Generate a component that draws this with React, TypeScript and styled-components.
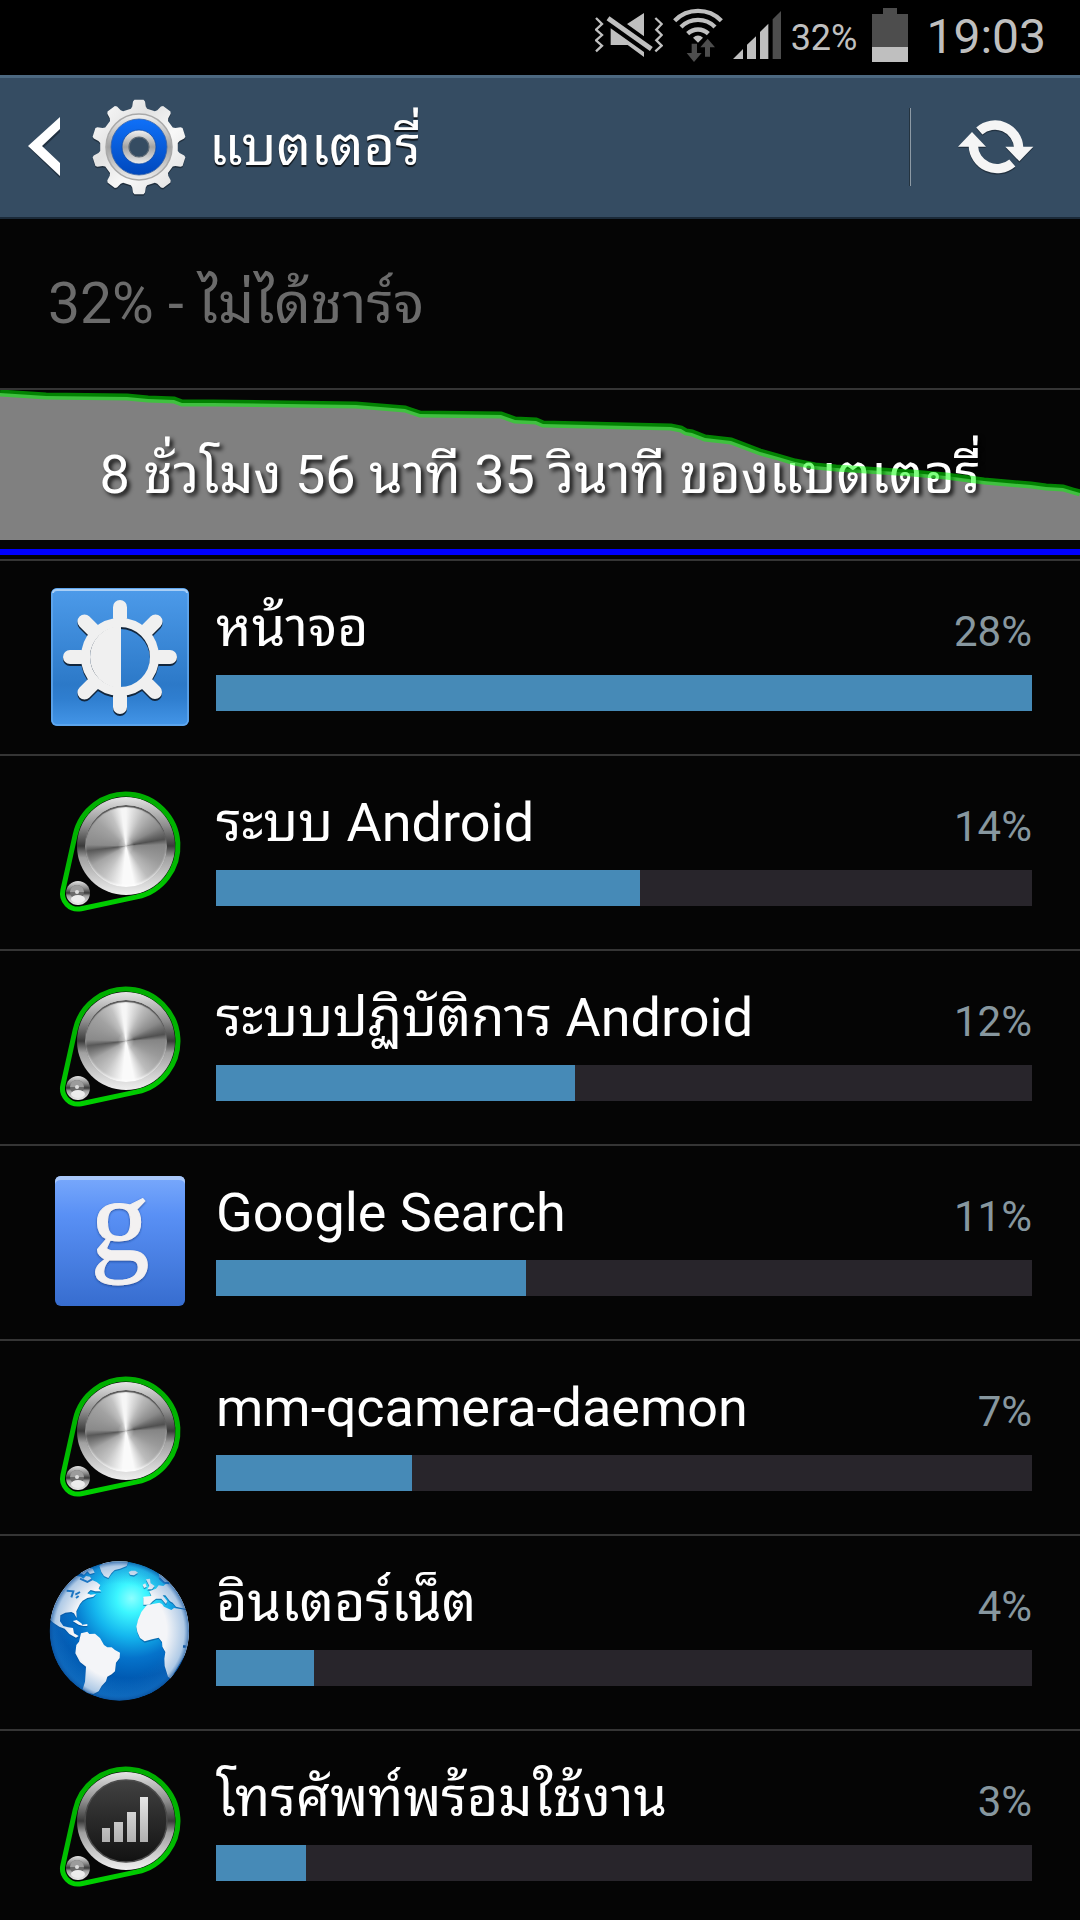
import React from "react";
import styled, { createGlobalStyle } from "styled-components";

const GlobalStyle = createGlobalStyle`
  *, *::before, *::after { box-sizing: border-box; }
  body {
    margin: 0;
    background: #050505;
    color: #fff;
    font-family: Roboto, "Droid Sans Thai", "Noto Sans Thai Looped", Loma, Waree, Garuda, "Noto Sans Thai", "Noto Sans", sans-serif;
  }
`;

const Screen = styled.div`
  display: flex;
  flex-direction: column;
  height: 100vh;
  overflow: hidden;
  background: #050505;
`;

const StatusBar = styled.div`
  flex: none;
  display: flex;
  align-items: center;
  justify-content: flex-end;
  height: 75px;
  padding: 0 34px 5px;
  gap: 10px;
  background: #000;
  color: #bfbfbf;
`;

const BatteryLevel = styled.span`
  padding-top: 5px;
  font-size: 36px;
  line-height: 42px;
`;

const BatterySlot = styled.span`
  display: flex;
  padding: 0 8px 0 5px;
`;

const Clock = styled.time`
  font-size: 48px;
  line-height: 60px;
  padding-top: 4px;
`;

const Header = styled.header`
  flex: none;
  display: flex;
  align-items: center;
  height: 144px;
  padding-top: 2px;
  background: #354c62;
  border-bottom: 2px solid #1b2a39;
  box-shadow: inset 0 3px #4c6880;
`;

const BackButton = styled.button`
  display: flex;
  align-items: center;
  gap: 30px;
  height: 100%;
  padding: 0 22px 0 27px;
  border: 0;
  background: none;
`;

const Title = styled.h1`
  flex: 1;
  margin: 0;
  font-size: 54px;
  font-weight: 400;
  line-height: 84px;
  text-shadow: 0 2px 1px rgba(0, 0, 0, 0.75);
`;

const RefreshButton = styled.button`
  display: flex;
  align-items: center;
  justify-content: center;
  width: 171px;
  height: 78px;
  padding: 0 0 0 2px;
  border: 0;
  border-left: 1px solid #24333f;
  box-shadow: inset 1px 0 #8d9aa5;
  background: none;
`;

const Status = styled.p`
  flex: none;
  margin: 0;
  padding: 0 48px;
  color: #6b6b6b;
  font-size: 57px;
  line-height: 169px;
`;

const ChartPanel = styled.section`
  flex: none;
  display: grid;
  height: 171px;
  border-top: 2px solid #353535;
  > * { grid-area: 1 / 1; }
`;

const ChartLayer = styled.svg`
  display: block;
  width: 100%;
  height: 169px;
`;

const ChartLabel = styled.p`
  align-self: center;
  margin: 0;
  text-align: center;
  font-size: 54px;
  line-height: 84px;
  text-shadow: 3px 3px 4px rgba(0, 0, 0, 0.85);
`;

const List = styled.ul`
  flex: 1;
  min-height: 0;
  margin: 0;
  padding: 0;
  list-style: none;
  overflow-y: auto;
  scrollbar-width: none;
`;

const Item = styled.li`
  display: flex;
  gap: 24px;
  padding: 24px 48px 25px;
  border-top: 2px solid #353535;
`;

const ItemIcon = styled.svg`
  flex: none;
  display: block;
  width: 144px;
  height: 144px;
  overflow: visible;
`;

const ItemBody = styled.div`
  flex: 1;
  min-width: 0;
`;

const ItemHeading = styled.div`
  display: flex;
  align-items: baseline;
  justify-content: space-between;
  height: 90px;
  line-height: 86px;
`;

const Name = styled.span`
  font-size: 54px;
  white-space: nowrap;
`;

const Percent = styled.span`
  font-size: 42px;
  color: #87979f;
`;

const Track = styled.div`
  height: 36px;
  background: #28252b;
`;

const Fill = styled.div<{ $share: number }>`
  width: ${(p) => p.$share}%;
  height: 100%;
  background: #468ab7;
`;

const KnobFace = styled.div`
  width: 82px;
  height: 82px;
  border-radius: 50%;
  background:
    radial-gradient(circle, rgba(255, 255, 255, 0.5) 0, transparent 14%),
    conic-gradient(
      #f6f6f6 0deg, #b8b8b8 30deg, #8a8a8a 60deg, #505050 80deg, #858585 88deg,
      #9a9a9a 115deg, #bcbcbc 145deg, #fafafa 168deg, #fafafa 185deg, #c4c4c4 215deg,
      #a4a4a4 240deg, #585858 263deg, #8a8a8a 272deg, #a2a2a2 310deg, #c2c2c2 335deg, #f6f6f6 353deg
    );
  box-shadow: inset 0 2px 1px #555, inset 0 -2px 2px rgba(255, 255, 255, 0.6);
`;

const VibrateMuteIcon = () => (
  <svg width="68" height="44" viewBox="45 42 204 132" aria-hidden="true">
    <g fill="none" stroke="#bfbfbf" strokeWidth="7">
      <path d="M48 57 66 75 48 92 66 108 48 124 66 140 48 157" />
      <path d="M226 57 245 75 229 92 245 108 229 124 245 140 226 157" />
      <path d="M84 58 214 150" strokeWidth="15" />
    </g>
    <path d="M192 42V112L141 75ZM92 88 192 159V174L143 138H92Z" fill="#bfbfbf" />
  </svg>
);

const WifiIcon = () => (
  <svg width="50" height="54" viewBox="279 25 150 162" aria-hidden="true">
    <g fill="none" stroke="#bfbfbf" strokeWidth="13">
      <path d="M284 63A98 98 0 0 1 424 63" />
      <path d="M303 82A72 72 0 0 1 405 82" />
      <path d="M323 102A45 45 0 0 1 385 102" />
    </g>
    <path d="M339 114Q354 101 369 114L354 129Z" fill="#bfbfbf" />
    <path d="M335 132H351V160H365L342 187 320 160H335ZM383 117 405 143H390V171H375V143H361Z" fill="#4d4d4d" />
  </svg>
);

const SignalIcon = () => (
  <svg width="48" height="48" viewBox="462 37 144 144" aria-hidden="true">
    <path d="M462 181 492 151V181ZM504 181V138L531 113V181ZM543 181V100L568 75V181Z" fill="#bfbfbf" />
    <path d="M581 181V62L606 37V181Z" fill="#4d4d4d" />
  </svg>
);

const BatteryIcon = () => (
  <svg width="36" height="54" viewBox="0 0 36 54" aria-hidden="true">
    <path d="M11 0H25V6H36V39H0V6H11Z" fill="#4d4d4d" />
    <path d="M0 39H36V54H0Z" fill="#bfbfbf" />
  </svg>
);

// Ten-toothed outline: each tooth is a trapezoid with slightly eased corners.
const gearPath = (() => {
  const profile: Array<[number, number]> = [
    [-12, 39], [-9.5, 41], [-7.5, 46], [-5.5, 47.5], [5.5, 47.5], [7.5, 46], [9.5, 41], [12, 39],
  ];
  const points: string[] = [];
  for (let tooth = 0; tooth < 10; tooth++) {
    for (const [offset, radius] of profile) {
      const angle = ((tooth * 36 + offset - 90) * Math.PI) / 180;
      points.push(`${(48 + radius * Math.cos(angle)).toFixed(2)} ${(48 + radius * Math.sin(angle)).toFixed(2)}`);
    }
  }
  return `M${points.join("L")}Z`;
})();

const BackIcon = () => (
  <svg width="34" height="64" viewBox="0 0 34 64" aria-hidden="true">
    <path d="M2 33 33 4V17L16 33 33 50V63Z" fill="#14202c" opacity=".6" />
    <path d="M1 31 33 2V14L15 31 33 48V61Z" fill="#fff" />
  </svg>
);

const GearIcon = () => (
  <svg width="96" height="96" viewBox="0 0 96 96" overflow="visible" aria-hidden="true">
    <defs>
      <linearGradient id="gearBody" x1="0" y1="0" x2="1" y2="1">
        <stop offset="0" stopColor="#fff" />
        <stop offset=".35" stopColor="#e2e2e2" />
        <stop offset=".6" stopColor="#f8f8f8" />
        <stop offset="1" stopColor="#dcdcdc" />
      </linearGradient>
      <linearGradient id="gearRing" x1="0" y1="0" x2="0" y2="1">
        <stop offset="0" stopColor="#f2f2f2" />
        <stop offset=".5" stopColor="#a2a2a2" />
        <stop offset="1" stopColor="#ededed" />
      </linearGradient>
      <linearGradient id="gearBlue" x1="0" y1="0" x2="0" y2="1">
        <stop offset="0" stopColor="#0f70f8" />
        <stop offset="1" stopColor="#0048bd" />
      </linearGradient>
    </defs>
    <path d={gearPath} fill="#18242f" opacity=".7" transform="translate(0 1.5)" />
    <path d={gearPath} fill="url(#gearBody)" />
    <circle cx="48" cy="48" r="33" fill="url(#gearRing)" stroke="#a9a9a9" strokeWidth="1.5" />
    <circle cx="48" cy="48" r="28" fill="url(#gearBlue)" stroke="#3b66a8" strokeWidth=".8" />
    <circle cx="48" cy="48" r="17" fill="url(#gearRing)" stroke="#0d4aa8" strokeWidth=".8" />
    <circle cx="48" cy="48" r="10" fill="#354c62" stroke="#5e6a75" strokeWidth="1.2" />
  </svg>
);

const RefreshShape = () => (
  <>
    <path d="M299 184A71 71 0 0 1 417 234" fill="none" strokeWidth="28" />
    <path d="M398 280A71 71 0 0 1 281 228" fill="none" strokeWidth="28" />
    <path d="M377 231H461L419 275ZM235 231H319L277 187Z" stroke="none" />
  </>
);

const RefreshIcon = () => (
  <svg width="78" height="62" viewBox="232 139 234 186" aria-hidden="true">
    <g fill="#1a2733" stroke="#1a2733" opacity=".7" transform="translate(0 4)"><RefreshShape /></g>
    <g fill="#f5f5f5" stroke="#f5f5f5"><RefreshShape /></g>
  </svg>
);

const ScreenIcon = () => (
  <ItemIcon viewBox="0 0 144 144" aria-hidden="true">
    <defs>
      <linearGradient id="tile" x1="0" y1="0" x2="0" y2="1">
        <stop offset="0" stopColor="#4d9bea" />
        <stop offset=".7" stopColor="#2c79c8" />
        <stop offset=".8" stopColor="#2f7ecf" />
        <stop offset="1" stopColor="#4496e8" />
      </linearGradient>
    </defs>
    <rect x="3" y="3" width="138" height="138" rx="6" fill="url(#tile)" />
    <rect x="4" y="4" width="136" height="136" rx="5" fill="none" stroke="#64a9ee" strokeWidth="1.5" />
    <path d="M5 8Q5 5 9 5H135Q139 5 139 8" fill="none" stroke="#a9cff6" strokeWidth="2" />
    {[{ y: 2, c: "#12263c" }, { y: 0, c: "#f0f0f0" }].map(({ y, c }) => (
      <g key={c} transform={`translate(0 ${y})`} stroke={c} fill={c}>
        <path
          d="M72 22V33M72 111V122M22 72H33M111 72H122M36.500 36.500 45 45M99 99 107 107M36.500 107.500 45 99M99 45 107.500 36.500"
          strokeWidth="14" strokeLinecap="round"
        />
        <circle cx="72" cy="72" r="34.5" fill="none" strokeWidth="9" />
        <path d="M73 41V103A31 31 0 0 1 73 41Z" stroke="none" />
      </g>
    ))}
  </ItemIcon>
);

const ProcessIcon = ({ id, face }: { id: string; face: "metal" | "signal" }) => (
  <ItemIcon viewBox="0 0 144 144" aria-hidden="true">
    <defs>
      <linearGradient id={`${id}Rim`} x1="0" y1="0" x2="0" y2="1">
        <stop offset="0" stopColor="#e4e4e4" />
        <stop offset=".3" stopColor="#8c8c8c" />
        <stop offset=".5" stopColor="#3a3a3a" />
        <stop offset=".62" stopColor="#a0a0a0" />
        <stop offset="1" stopColor="#f0f0f0" />
      </linearGradient>
      <linearGradient id={`${id}Dark`} x1="0" y1="0" x2="0" y2="1">
        <stop offset="0" stopColor="#414141" />
        <stop offset="1" stopColor="#121212" />
      </linearGradient>
      <linearGradient id={`${id}Bars`} x1="0" y1="0" x2="0" y2="1">
        <stop offset="0" stopColor="#e6e6e6" />
        <stop offset="1" stopColor="#b0b0b0" />
      </linearGradient>
      <linearGradient id={`${id}Belt`} x1="0" y1="0" x2="0" y2="1">
        <stop offset="0" stopColor="#00ae00" />
        <stop offset=".6" stopColor="#00b800" />
        <stop offset="1" stopColor="#00d000" />
      </linearGradient>
    </defs>
    <circle cx="78" cy="66" r="49" fill={`url(#${id}Rim)`} />
    {face === "metal" ? (
      <foreignObject x="37" y="25" width="82" height="82"><KnobFace /></foreignObject>
    ) : (
      <>
        <circle cx="78" cy="66" r="41" fill={`url(#${id}Dark)`} stroke="#4c4c4c" strokeWidth="1.5" />
        <path d="M54 73H62V87H54ZM66 67H75V87H66ZM79 57H88V87H79ZM92 42H100V87H92Z" fill={`url(#${id}Bars)`} />
      </>
    )}
    <circle cx="30" cy="113" r="12" fill={`url(#${id}Rim)`} />
    <circle cx="29" cy="112" r="7" fill="#6a6a6a" />
    <path d="M22 112A7 7 0 0 1 36 112Z" fill="#9c9c9c" />
    <ellipse cx="30" cy="119" rx="7" ry="4" fill="#ededed" />
    <circle cx="29" cy="112" r="2" fill="#ddd" />
    <path
      d="M14.900 110.100 27.200 54.700A52 52 0 1 1 88.800 116.900L33.200 128.700A15.500 15.500 0 0 1 14.900 110.100Z"
      fill="none" stroke={`url(#${id}Belt)`} strokeWidth="5"
    />
  </ItemIcon>
);

const SearchIcon = () => (
  <ItemIcon viewBox="0 0 144 144" aria-hidden="true">
    <defs>
      <linearGradient id="searchTile" x1="0" y1="0" x2="0" y2="1">
        <stop offset="0" stopColor="#79a9fc" />
        <stop offset=".3" stopColor="#5990f5" />
        <stop offset="1" stopColor="#376dcf" />
      </linearGradient>
      <filter id="letterShadow" x="-20%" y="-20%" width="140%" height="140%">
        <feDropShadow dx="0" dy="1" stdDeviation="1" floodColor="#1c3f88" floodOpacity=".8" />
      </filter>
    </defs>
    <rect x="7" y="6" width="130" height="130" rx="6" fill="url(#searchTile)" />
    <path d="M7 14V12Q7 6 13 6H131Q137 6 137 12V14Q136 10 131 10H13Q8 10 7 14Z" fill="#a9c8fb" />
    <text x="72" y="90" textAnchor="middle" fontFamily="'Liberation Serif', 'Times New Roman', serif" fontSize="118" fill="#f3f1f1" stroke="#f3f1f1" filter="url(#letterShadow)">g</text>
  </ItemIcon>
);

const GlobeIcon = () => (
  <ItemIcon viewBox="144 90 432 432" aria-hidden="true">
    <defs>
      <radialGradient id="ocean" gradientUnits="userSpaceOnUse" cx="395" cy="205" r="320">
        <stop offset="0" stopColor="#8cffff" />
        <stop offset=".14" stopColor="#3cf6ff" />
        <stop offset=".36" stopColor="#14b6ee" />
        <stop offset=".56" stopColor="#0573cb" />
        <stop offset=".75" stopColor="#005ab2" />
        <stop offset="1" stopColor="#0a6cc0" />
      </radialGradient>
      <radialGradient id="limb" gradientUnits="userSpaceOnUse" cx="358" cy="303" r="209">
        <stop offset=".68" stopColor="#1d6fc0" stopOpacity="0" />
        <stop offset=".93" stopColor="#1d6fc0" stopOpacity=".32" />
        <stop offset="1" stopColor="#0a4c98" stopOpacity=".75" />
      </radialGradient>
      <clipPath id="globeEdge"><circle cx="358" cy="303" r="209" /></clipPath>
    </defs>
    <g clipPath="url(#globeEdge)">
      <circle cx="358" cy="303" r="209" fill="url(#ocean)" />
      {[{ y: 4, c: "#064f94", o: 0.6 }, { y: 0, c: "#f4f5f8", o: 1 }].map(({ y, c, o }) => (
        <g key={c} fill={c} opacity={o} transform={`translate(0 ${y})`}>
          <path d="M243 310 262 305 268 312 285 311 300 324 312 345 322 352 335 352 345 360 360 368 359 384 348 398 345 424 335 433 322 440 318 454 305 468 296 484 280 492 262 488 248 478 255 455 258 410 240 396 226 370 229 345 237 335Z" />
          <path d="M140 260 160 278 178 290 194 296 208 312 228 323 236 318 222 310 219 294 204 292 190 288 180 274 181 256 196 248 214 246 222 250 230 264 229 244 240 222 248 212 262 204 280 200 288 192 272 194 262 190 272 180 286 184 304 184 296 176 301 165 290 156 276 150 270 140 258 138 250 146 242 140 232 138 210 130 140 190Z" />
          <path d="M238 128 262 112 278 116 284 128 270 132 262 124 252 134Z" />
          <path d="M298 108 320 90 386 92 380 108 360 116 344 120 334 130 325 144 312 138 304 126Z" />
          <path d="M386 126 394 122 406 122 414 128 402 136 390 134Z" />
          <path d="M218 273 230 270 244 280 250 288 236 284ZM248 284 262 282 262 288 250 288Z" />
          <path d="M428 164 436 160 440 170 432 174ZM438 148 450 146 452 160 464 168 456 178 442 178 448 168Z" />
          <path d="M430 224 430 200 454 198 448 184 468 176 476 166 490 168 500 160 480 146 476 132 500 130 590 220 560 238 528 230 518 218 510 214 496 196 488 196 502 214 498 222 484 206 468 206 458 214 448 224Z" />
          <path d="M440 226 478 218 486 222 492 230 514 240 522 234 560 240 600 300 512 446 504 440 494 408 493 386 496 366 487 350 486 336 476 323 456 328 434 334 420 324 412 306 409 290 414 270 424 246Z" />
        </g>
      ))}
      <g fill="none" stroke="#1d78c4" strokeWidth="6">
        <path d="M200 182 220 184 214 202M226 194 240 186M228 204 236 198M240 146 262 156 276 148M478 144 492 158 508 160" />
      </g>
      <path d="M549 346H557V353H549Z" fill="#0d4d92" />
      <circle cx="358" cy="303" r="209" fill="url(#limb)" />
    </g>
  </ItemIcon>
);

const levels: Array<[number, number]> = [
  [0, 3], [46, 6], [127, 7], [148, 9], [174, 10], [182, 13], [213, 13], [356, 15], [405, 19], [408, 20],
  [420, 24], [501, 25], [515, 30], [536, 31], [543, 34], [671, 37], [681, 39], [686, 42], [692, 43],
  [705, 48], [731, 51], [760, 62], [778, 67], [795, 72], [815, 76], [836, 78], [912, 83], [946, 86],
  [984, 91], [1031, 95], [1046, 97], [1063, 98], [1073, 101], [1080, 103],
];
const levelLine = `M${levels.map(([x, y]) => `${x} ${y}`).join("L")}`;

const BatteryChart = () => (
  <ChartPanel>
    <ChartLayer viewBox="0 0 1080 169" preserveAspectRatio="none" aria-hidden="true">
      <path d={`${levelLine}V150H0Z`} fill="#808080" />
      <path d="M0 159H1080V165H0Z" fill="#00f" />
    </ChartLayer>
    <ChartLabel>8 ชั่วโมง 56 นาที 35 วินาที ของแบตเตอรี่</ChartLabel>
    <ChartLayer viewBox="0 0 1080 169" preserveAspectRatio="none" aria-hidden="true">
      <path d={levelLine} fill="none" stroke="#0f0" strokeOpacity=".5" strokeWidth="7" />
    </ChartLayer>
  </ChartPanel>
);

const usage = [
  { name: "หน้าจอ", percent: 28, share: 100, icon: <ScreenIcon /> },
  { name: "ระบบ Android", percent: 14, share: 52, icon: <ProcessIcon id="system" face="metal" /> },
  { name: "ระบบปฏิบัติการ Android", percent: 12, share: 44, icon: <ProcessIcon id="os" face="metal" /> },
  { name: "Google Search", percent: 11, share: 38, icon: <SearchIcon /> },
  { name: "mm-qcamera-daemon", percent: 7, share: 24, icon: <ProcessIcon id="camera" face="metal" /> },
  { name: "อินเตอร์เน็ต", percent: 4, share: 12, icon: <GlobeIcon /> },
  { name: "โทรศัพท์พร้อมใช้งาน", percent: 3, share: 11, icon: <ProcessIcon id="phone" face="signal" /> },
];

export default function App() {
  return (
    <Screen>
      <GlobalStyle />
      <StatusBar>
        <VibrateMuteIcon />
        <WifiIcon />
        <SignalIcon />
        <BatteryLevel>32%</BatteryLevel>
        <BatterySlot><BatteryIcon /></BatterySlot>
        <Clock>19:03</Clock>
      </StatusBar>
      <Header>
        <BackButton type="button" aria-label="กลับ">
          <BackIcon />
          <GearIcon />
        </BackButton>
        <Title>แบตเตอรี่</Title>
        <RefreshButton type="button" aria-label="รีเฟรช">
          <RefreshIcon />
        </RefreshButton>
      </Header>
      <Status>32% - ไม่ได้ชาร์จ</Status>
      <BatteryChart />
      <List>
        {usage.map(({ name, percent, share, icon }) => (
          <Item key={name}>
            {icon}
            <ItemBody>
              <ItemHeading>
                <Name>{name}</Name>
                <Percent>{percent}%</Percent>
              </ItemHeading>
              <Track><Fill $share={share} /></Track>
            </ItemBody>
          </Item>
        ))}
      </List>
    </Screen>
  );
}
